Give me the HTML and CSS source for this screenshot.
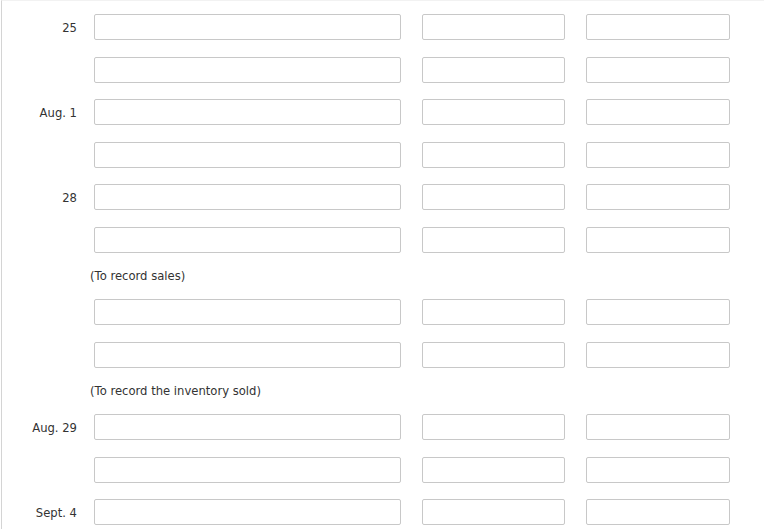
FILE: index.html
```html
<!DOCTYPE html>
<html>
<head>
<meta charset="utf-8">
<link rel="stylesheet" href="styles.css">
</head>
<body>
<div class="sheet">
  <div class="row"><div class="date">25</div><input class="acct"><input class="amt"><input class="amt2"></div>
  <div class="row"><div class="date"></div><input class="acct"><input class="amt"><input class="amt2"></div>
  <div class="row"><div class="date">Aug. 1</div><input class="acct"><input class="amt"><input class="amt2"></div>
  <div class="row"><div class="date"></div><input class="acct"><input class="amt"><input class="amt2"></div>
  <div class="row"><div class="date">28</div><input class="acct"><input class="amt"><input class="amt2"></div>
  <div class="row"><div class="date"></div><input class="acct"><input class="amt"><input class="amt2"></div>
  <div class="note">(To record sales)</div>
  <div class="row"><div class="date"></div><input class="acct"><input class="amt"><input class="amt2"></div>
  <div class="row"><div class="date"></div><input class="acct"><input class="amt"><input class="amt2"></div>
  <div class="note">(To record the inventory sold)</div>
  <div class="row"><div class="date">Aug. 29</div><input class="acct"><input class="amt"><input class="amt2"></div>
  <div class="row"><div class="date"></div><input class="acct"><input class="amt"><input class="amt2"></div>
  <div class="row"><div class="date">Sept. 4</div><input class="acct"><input class="amt"><input class="amt2"></div>
</div>
</body>
</html>
```
FILE: styles.css
```css
html, body {
  margin: 0;
  padding: 0;
  background: #fff;
}
body {
  font-family: "DejaVu Sans", Verdana, sans-serif;
  font-size: 11.6px;
  color: #333;
  overflow: hidden;
  height: 529px;
}
.sheet {
  margin-left: 1px;
  border-left: 1px solid #d4d4d4;
  border-top: 1px solid #f2f2f2;
  padding-top: 5px;
  height: 529px;
  overflow: hidden;
  box-sizing: border-box;
}
.row {
  display: grid;
  grid-template-columns: 75px 307px 143px 144px;
  align-items: center;
  height: 42.5px;
}
.date {
  text-align: right;
  padding-top: 1px;
}
input {
  box-sizing: border-box;
  height: 26px;
  border: 1px solid #c8c8c8;
  border-radius: 2px;
  background: #fff;
  margin: 0;
  padding: 0 4px;
  font: inherit;
}
.acct { margin-left: 17px; width: 307px; }
.amt { margin-left: 38px; width: 143px; }
.amt2 { margin-left: 59px; width: 144px; }
.note {
  box-sizing: border-box;
  height: 30px;
  padding-top: 1px;
  line-height: 28px;
  padding-left: 88px;
}
```
